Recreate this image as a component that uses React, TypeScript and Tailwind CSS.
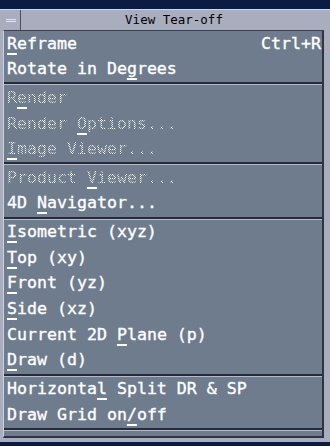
import React from "react";

type Item = { label: string; m: number; accel?: string; off?: boolean };

const groups: Item[][] = [
  [
    { label: "Reframe", m: 0, accel: "Ctrl+R" },
    { label: "Rotate in Degrees", m: 12 },
  ],
  [
    { label: "Render", m: 1, off: true },
    { label: "Render Options...", m: 7, off: true },
    { label: "Image Viewer...", m: 0, off: true },
  ],
  [
    { label: "Product Viewer...", m: 8, off: true },
    { label: "4D Navigator...", m: 3 },
  ],
  [
    { label: "Isometric (xyz)", m: 0 },
    { label: "Top (xy)", m: 0 },
    { label: "Front (yz)", m: 0 },
    { label: "Side (xz)", m: 0 },
    { label: "Current 2D Plane (p)", m: 11 },
    { label: "Draw (d)", m: 0 },
  ],
  [
    { label: "Horizontal Split DR & SP", m: 9 },
    { label: "Draw Grid on/off", m: 12 },
  ],
];

const stipple =
  "text-transparent bg-[repeating-conic-gradient(#ffffff_0_25%,transparent_0_50%)] bg-[length:2px_2px] bg-clip-text";
const solid = "text-white [-webkit-text-stroke:0.35px_#ffffff]";

function Row({ item }: { item: Item }) {
  const { label, m } = item;
  return (
    <div className="h-[25.67px] flex items-center justify-between pl-[3px] pr-[1px] whitespace-pre">
      <span className={item.off ? stipple : solid}>
        {label.slice(0, m)}
        <span className="underline decoration-[1.5px] underline-offset-[4px] decoration-white">
          {label[m]}
        </span>
        {label.slice(m + 1)}
      </span>
      {item.accel && <span className={solid}>{item.accel}</span>}
    </div>
  );
}

export default function App() {
  return (
    <div className="w-[330px] h-[446px] bg-[#0c1b42] pt-[9px] pb-[4px]">
      <div className="h-full flex flex-col bg-[#a9aebf] border-t border-[#d4d7e2] pl-[3px] pr-[6px] pb-[4px]">
        {/* title bar */}
        <div className="h-[20px] flex -ml-[1px] -mr-[3px]">
          <div className="w-[19px] h-full border-r border-[#4a5064] flex items-center justify-center">
            <div className="w-[10px] h-[3px] bg-[#a9aebf] border-t border-[#e4e6ee] border-b border-[#4a5064]" />
          </div>
          <div className="flex-1 flex items-center justify-center text-black text-[12.5px] font-['DejaVu_Sans_Mono',monospace]">
            View Tear-off
          </div>
        </div>
        {/* menu body */}
        <div className="flex-1 bg-[#6e7c8e] border-t border-[#3a4052] border-l border-l-[#cdd1dd] border-r-2 border-r-[#2f3444] border-b-2 border-b-[#2f3444] font-['DejaVu_Sans_Mono',monospace] text-[16.6px] leading-none">
          {groups.map((g, i) => (
            <div key={i}>
              {g.map((it) => (
                <Row key={it.label} item={it} />
              ))}
              <div className="h-[3px] border-t-2 border-[#262b38] border-b border-b-[#b4bacb]" />
            </div>
          ))}
        </div>
      </div>
    </div>
  );
}
